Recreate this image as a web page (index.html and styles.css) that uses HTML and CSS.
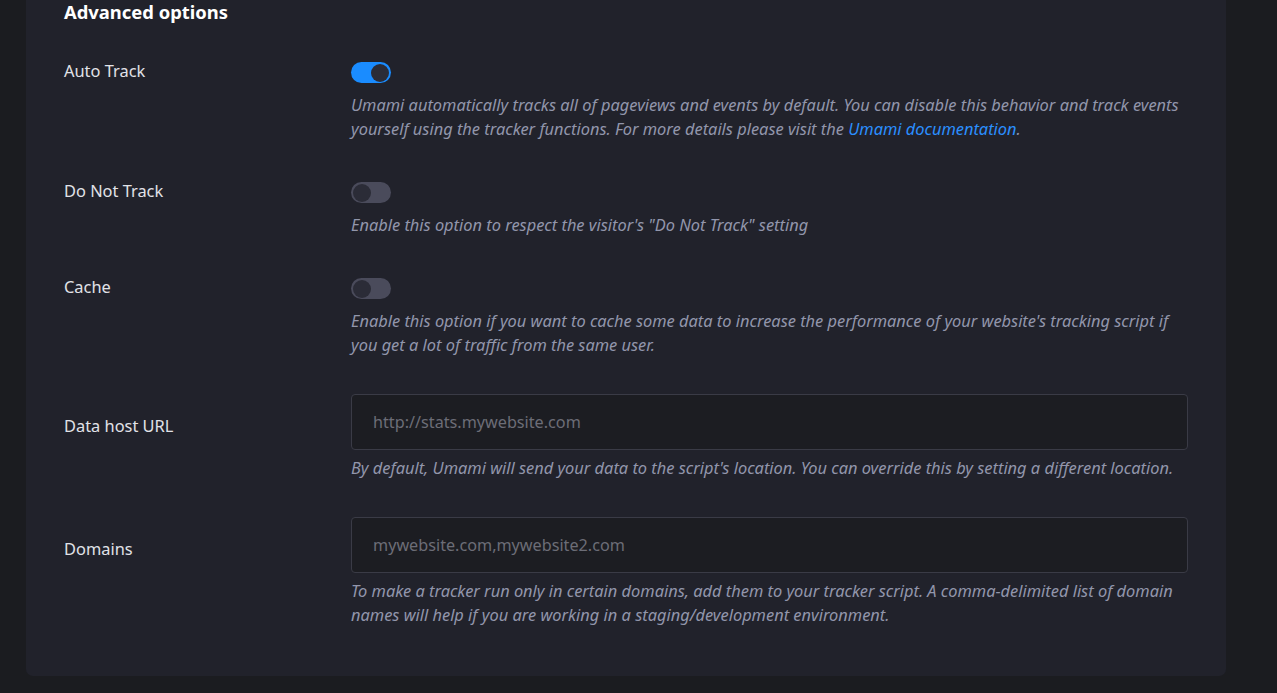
FILE: index.html
```html
<!DOCTYPE html>
<html lang="en">
<head>
<meta charset="utf-8">
<title>Advanced options</title>
<link rel="stylesheet" href="styles.css">
</head>
<body>
<div class="page">
  <section class="card">
    <h2 class="title">Advanced options</h2>
    <div class="fields">
      <div class="field gap-41">
        <div class="label label-toggle">Auto Track</div>
        <div class="control">
          <span class="toggle on"><span class="knob"></span></span>
          <p class="desc">Umami automatically tracks all of pageviews and events by default. You can disable this behavior and track events yourself using the tracker functions. For more details please visit the <a class="link" href="#">Umami documentation</a>.</p>
        </div>
      </div>
      <div class="field gap-41">
        <div class="label label-toggle">Do Not Track</div>
        <div class="control">
          <span class="toggle"><span class="knob"></span></span>
          <p class="desc">Enable this option to respect the visitor's "Do Not Track" setting</p>
        </div>
      </div>
      <div class="field">
        <div class="label label-toggle">Cache</div>
        <div class="control">
          <span class="toggle"><span class="knob"></span></span>
          <p class="desc">Enable this option if you want to cache some data to increase the performance of your website's tracking script if you get a lot of traffic from the same user.</p>
        </div>
      </div>
      <div class="field">
        <div class="label label-input">Data host URL</div>
        <div class="control">
          <input class="input" type="text" placeholder="http://stats.mywebsite.com">
          <p class="desc desc-input">By default, Umami will send your data to the script's location. You can override this by setting a different location.</p>
        </div>
      </div>
      <div class="field">
        <div class="label label-input">Domains</div>
        <div class="control">
          <input class="input" type="text" placeholder="mywebsite.com,mywebsite2.com">
          <p class="desc desc-input">To make a tracker run only in certain domains, add them to your tracker script. A comma-delimited list of domain names will help if you are working in a staging/development environment.</p>
        </div>
      </div>
    </div>
  </section>
</div>
</body>
</html>
```

FILE: styles.css
```css
html, body {
  margin: 0;
  padding: 0;
  background: #1b1c20;
  height: 100%;
  overflow: hidden;
}
body {
  font-family: "Noto Sans", "Open Sans", sans-serif;
  color: #e3e4ea;
}
.page {
  padding: 0 51px 0 26px;
}
.card {
  background: #21222b;
  border-radius: 0 0 7px 7px;
  padding: 0 38px 49px 38px;
}
.title {
  margin: 0;
  font-size: 18.4px;
  line-height: 24px;
  font-weight: 700;
  color: #ffffff;
}
.fields {
  display: flex;
  flex-direction: column;
  gap: 37px;
  padding-top: 38px;
}
.field {
  display: grid;
  grid-template-columns: 287px 1fr;
}
.field.gap-41 {
  padding-bottom: 4px;
}
.label {
  display: flex;
  align-items: center;
  font-size: 16.4px;
  color: #e1e2e8;
}
.label-toggle {
  height: 17px;
}
.label-input {
  height: 62px;
}
.control {
  display: flex;
  flex-direction: column;
  align-items: flex-start;
}
.toggle {
  position: relative;
  display: block;
  width: 40px;
  height: 21px;
  border-radius: 11px;
  background: #4a4b5b;
}
.toggle .knob {
  position: absolute;
  top: 1.5px;
  left: 2px;
  width: 18px;
  height: 18px;
  border-radius: 50%;
  background: #2b2c37;
}
.toggle.on {
  background: #1a8cff;
}
.toggle.on .knob {
  left: 20px;
}
.desc {
  margin: 10px 0 0 0;
  font-size: 16.4px;
  line-height: 24px;
  font-style: italic;
  color: #9296ab;
}
.desc-input {
  margin-top: 6px;
}
.link {
  color: #2b8fff;
  text-decoration: none;
}
.input {
  box-sizing: border-box;
  width: 100%;
  height: 56px;
  margin: 0;
  padding: 0 21px;
  border: 1px solid #3a3b46;
  border-radius: 4px;
  background: #1c1d22;
  font-family: "Noto Sans", "Open Sans", sans-serif;
  font-size: 16.2px;
  color: #e3e4ea;
  outline: none;
}
.input::placeholder {
  color: #6c6d77;
}
```
